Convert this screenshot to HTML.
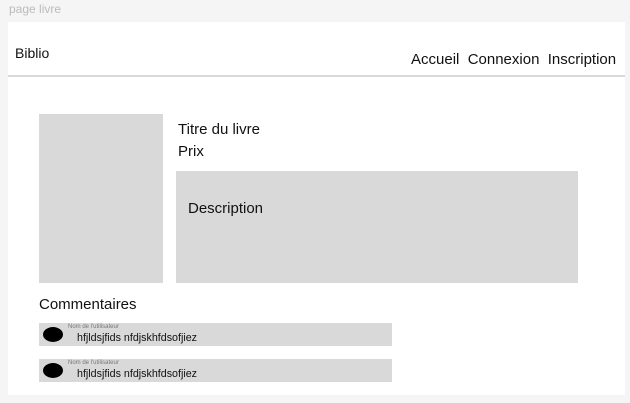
<!DOCTYPE html>
<html><head><style>
body{margin:0;width:630px;height:403px;background:#f5f5f5;font-family:"Liberation Sans",sans-serif;position:relative;overflow:hidden}
div,span{position:absolute}
.t{white-space:nowrap;color:#111}
</style></head><body>
<span class="t" style="left:9px;top:2px;font-size:12px;color:#bbb">page livre</span>
<div style="left:8px;top:22px;width:617px;height:373px;background:#fff"></div>
<span class="t" style="left:15px;top:45px;font-size:14px">Biblio</span>
<span class="t" style="left:411px;top:51px;font-size:15px">Accueil&nbsp; Connexion&nbsp; Inscription</span>
<div style="left:8px;top:75px;width:617px;height:2px;background:#d9d9d9"></div>
<div style="left:39px;top:114px;width:124px;height:169px;background:#d9d9d9"></div>
<span class="t" style="left:178px;top:121px;font-size:15px">Titre du livre</span>
<span class="t" style="left:178px;top:143px;font-size:15px">Prix</span>
<div style="left:176px;top:171px;width:402px;height:112px;background:#d9d9d9"></div>
<span class="t" style="left:188px;top:200px;font-size:15px">Description</span>
<span class="t" style="left:39px;top:296px;font-size:15px">Commentaires</span>
<div style="left:39px;top:323px;width:353px;height:23px;background:#d9d9d9"></div>
<div style="left:43px;top:327px;width:20px;height:15px;border-radius:50%;background:#000"></div>
<span class="t" style="left:68px;top:324px;font-size:6px;color:#777">Nom de l'utilisateur</span>
<span class="t" style="left:77px;top:332px;font-size:10.7px">hfjldsjfids nfdjskhfdsofjiez</span>
<div style="left:39px;top:359px;width:353px;height:23px;background:#d9d9d9"></div>
<div style="left:43px;top:363px;width:20px;height:15px;border-radius:50%;background:#000"></div>
<span class="t" style="left:68px;top:360px;font-size:6px;color:#777">Nom de l'utilisateur</span>
<span class="t" style="left:77px;top:368px;font-size:10.7px">hfjldsjfids nfdjskhfdsofjiez</span>
</body></html>
